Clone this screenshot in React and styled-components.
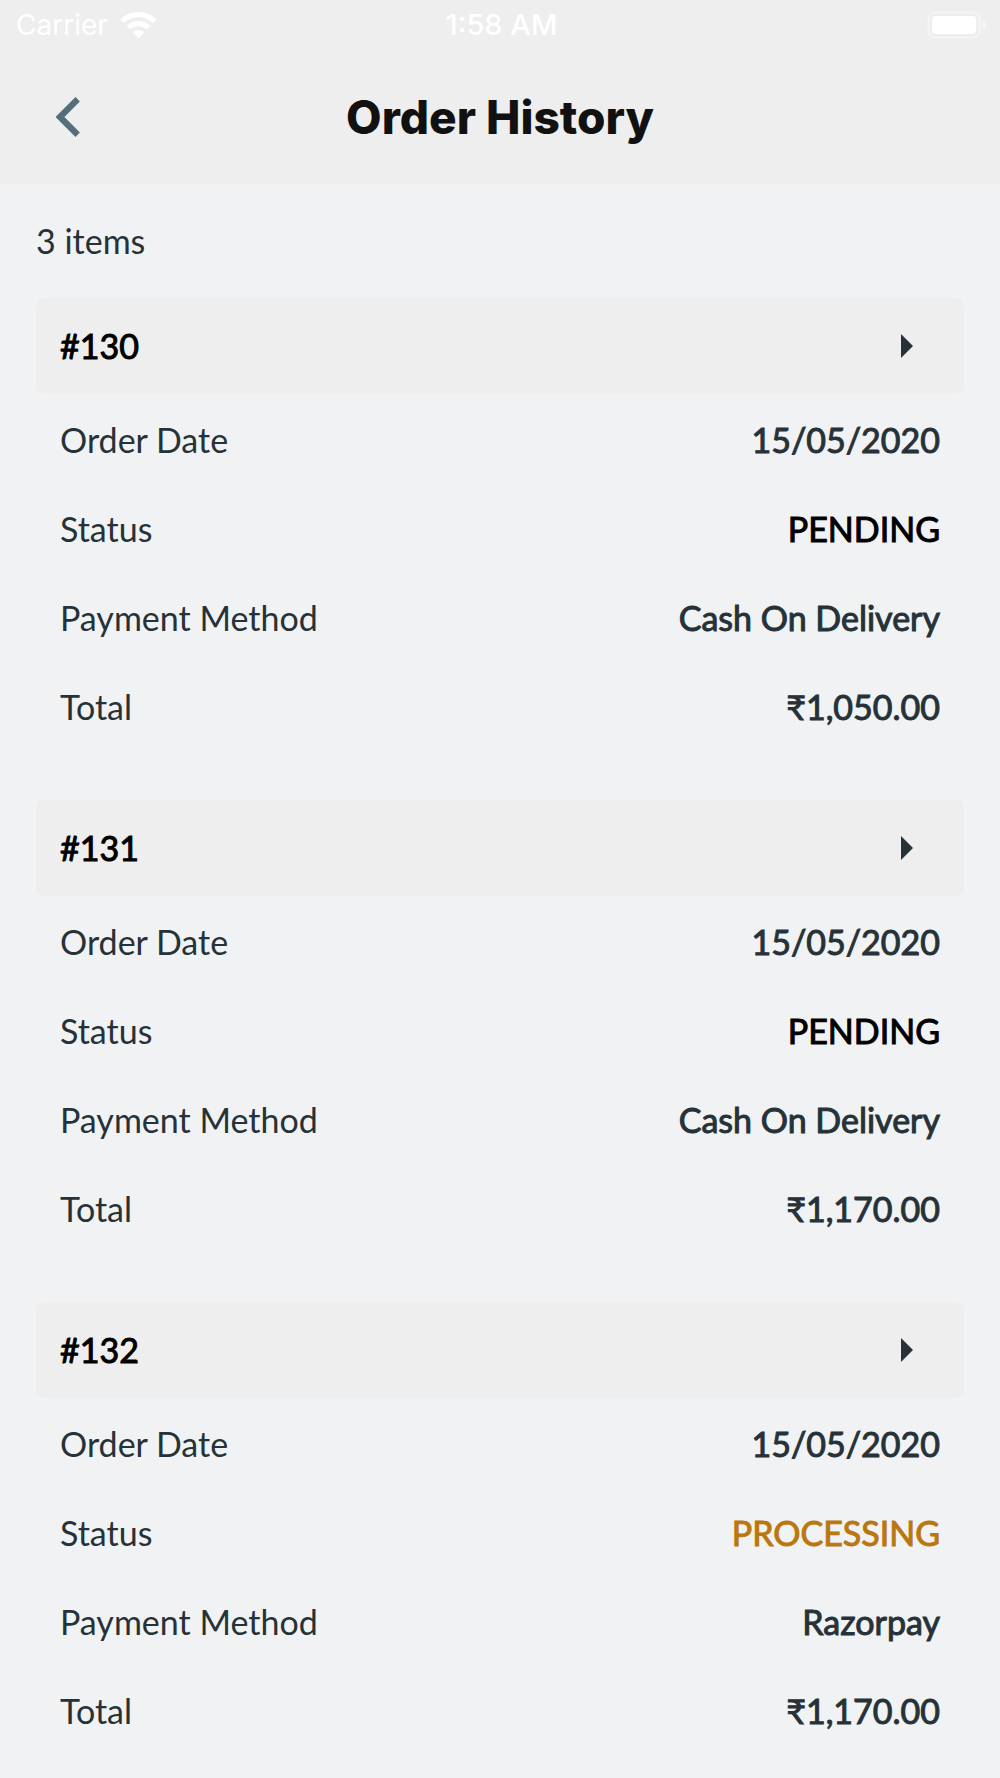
import React from 'react';
import styled, { createGlobalStyle } from 'styled-components';

const GlobalStyle = createGlobalStyle`
  * {
    box-sizing: border-box;
  }

  body {
    margin: 0;
    background-color: #f0f2f4;
    color: #263238;
    font-family: Lato, sans-serif;
    font-size: 34px;
    line-height: 40px;
  }
`;

const Header = styled.header`
  background-color: #eeeeee;
`;

const StatusBar = styled.div`
  display: grid;
  grid-template-columns: 1fr auto 1fr;
  align-items: center;
  height: 50px;
  padding: 0 13px 0 16px;
  color: #fff;
  font-family: Inter, sans-serif;
  font-size: 28px;
`;

const Carrier = styled.div`
  display: flex;
  align-items: center;
  gap: 12px;
`;

const Time = styled.time`
  font-size: 29px;
  font-weight: 500;
`;

const BatteryIcon = styled.svg`
  justify-self: end;
`;

const NavBar = styled.div`
  display: grid;
  grid-template-columns: 96px 1fr 96px;
  align-items: center;
  height: 134px;
  padding: 0 20px 1px;
`;

const BackButton = styled.button`
  display: flex;
  justify-content: center;
  align-items: center;
  width: 96px;
  height: 80px;
  padding: 0;
  border: none;
  background: none;
  cursor: pointer;
`;

const Title = styled.h1`
  margin: 0;
  color: #111;
  font-family: Inter, sans-serif;
  font-size: 46px;
  font-weight: 800;
  line-height: 56px;
  text-align: center;
`;

const Content = styled.main`
  padding: 37px 36px 22px;
`;

const ItemCount = styled.p`
  margin: 0 0 37px;
`;

const OrderList = styled.ul`
  display: flex;
  flex-direction: column;
  gap: 49px;
  margin: 0;
  padding: 0;
  list-style: none;
`;

const OrderHeader = styled.button`
  display: flex;
  justify-content: space-between;
  align-items: center;
  width: 100%;
  height: 96px;
  padding: 0 51px 0 24px;
  border: none;
  border-radius: 7px;
  background-color: #eeeeee;
  color: #000;
  font: inherit;
  -webkit-text-stroke: 1px currentColor;
  cursor: pointer;
`;

const Details = styled.dl`
  margin: 0;
  padding: 1px 24px 0;
`;

const DetailRow = styled.div`
  display: flex;
  justify-content: space-between;
  align-items: center;
  height: 89px;
`;

const Label = styled.dt`
  font-weight: 400;
`;

const Value = styled.dd`
  margin: 0;
  color: ${({ $color }) => $color || 'inherit'};
  -webkit-text-stroke: 1px currentColor;
`;

const statusColors = {
  PENDING: '#000',
  PROCESSING: '#b9770e',
};

const orders = [
  { id: 130, date: '15/05/2020', status: 'PENDING', payment: 'Cash On Delivery', total: '₹1,050.00' },
  { id: 131, date: '15/05/2020', status: 'PENDING', payment: 'Cash On Delivery', total: '₹1,170.00' },
  { id: 132, date: '15/05/2020', status: 'PROCESSING', payment: 'Razorpay', total: '₹1,170.00' },
];

const Wifi = () => (
  <svg width="37" height="27" viewBox="0 0 37 27" fill="#fff" aria-hidden="true">
    <path d="M18.5 0C11.4 0 5 2.8 0.3 7.4L4 11.1C7.7 7.4 12.9 5.2 18.5 5.2S29.3 7.4 33 11.1L36.7 7.4C32 2.8 25.6 0 18.5 0Z" />
    <path d="M18.5 9C13.8 9 9.6 10.9 6.6 13.9L10.3 17.6C12.4 15.5 15.3 14.2 18.5 14.2S24.6 15.5 26.7 17.6L30.4 13.9C27.4 10.9 23.2 9 18.5 9Z" />
    <path d="M18.5 18C16.3 18 14.3 18.9 12.9 20.3L18.5 26.5L24.1 20.3C22.7 18.9 20.7 18 18.5 18Z" />
  </svg>
);

const Battery = () => (
  <BatteryIcon width="60" height="28" viewBox="0 0 60 28" fill="#fff" aria-hidden="true">
    <rect x="1.5" y="1.5" width="51" height="25" rx="6.5" fill="none" stroke="#fff" strokeWidth="2" opacity="0.4" />
    <rect x="5" y="5" width="44" height="18" rx="4" />
    <path d="M56 9.5C58 10.2 59 12 59 14S58 17.8 56 18.5Z" opacity="0.5" />
  </BatteryIcon>
);

const Order = ({ order }) => (
  <li>
    <OrderHeader type="button">
      <span>#{order.id}</span>
      <svg width="12" height="24" viewBox="0 0 12 24" aria-hidden="true">
        <path d="M0 0L12 12L0 24Z" fill="#263238" />
      </svg>
    </OrderHeader>
    <Details>
      <DetailRow>
        <Label>Order Date</Label>
        <Value>{order.date}</Value>
      </DetailRow>
      <DetailRow>
        <Label>Status</Label>
        <Value $color={statusColors[order.status]}>{order.status}</Value>
      </DetailRow>
      <DetailRow>
        <Label>Payment Method</Label>
        <Value>{order.payment}</Value>
      </DetailRow>
      <DetailRow>
        <Label>Total</Label>
        <Value>{order.total}</Value>
      </DetailRow>
    </Details>
  </li>
);

const App = () => (
  <>
    <GlobalStyle />
    <Header>
      <StatusBar>
        <Carrier>
          Carrier
          <Wifi />
        </Carrier>
        <Time>1:58 AM</Time>
        <Battery />
      </StatusBar>
      <NavBar>
        <BackButton type="button" aria-label="Back">
          <svg width="24" height="40" viewBox="0 0 24 40" aria-hidden="true">
            <path d="M21.7 2.3L4 20L21.7 37.7" fill="none" stroke="#546e7a" strokeWidth="6.2" />
          </svg>
        </BackButton>
        <Title>Order History</Title>
      </NavBar>
    </Header>
    <Content>
      <ItemCount>{orders.length} items</ItemCount>
      <OrderList>
        {orders.map((order) => (
          <Order key={order.id} order={order} />
        ))}
      </OrderList>
    </Content>
  </>
);

export default App;
